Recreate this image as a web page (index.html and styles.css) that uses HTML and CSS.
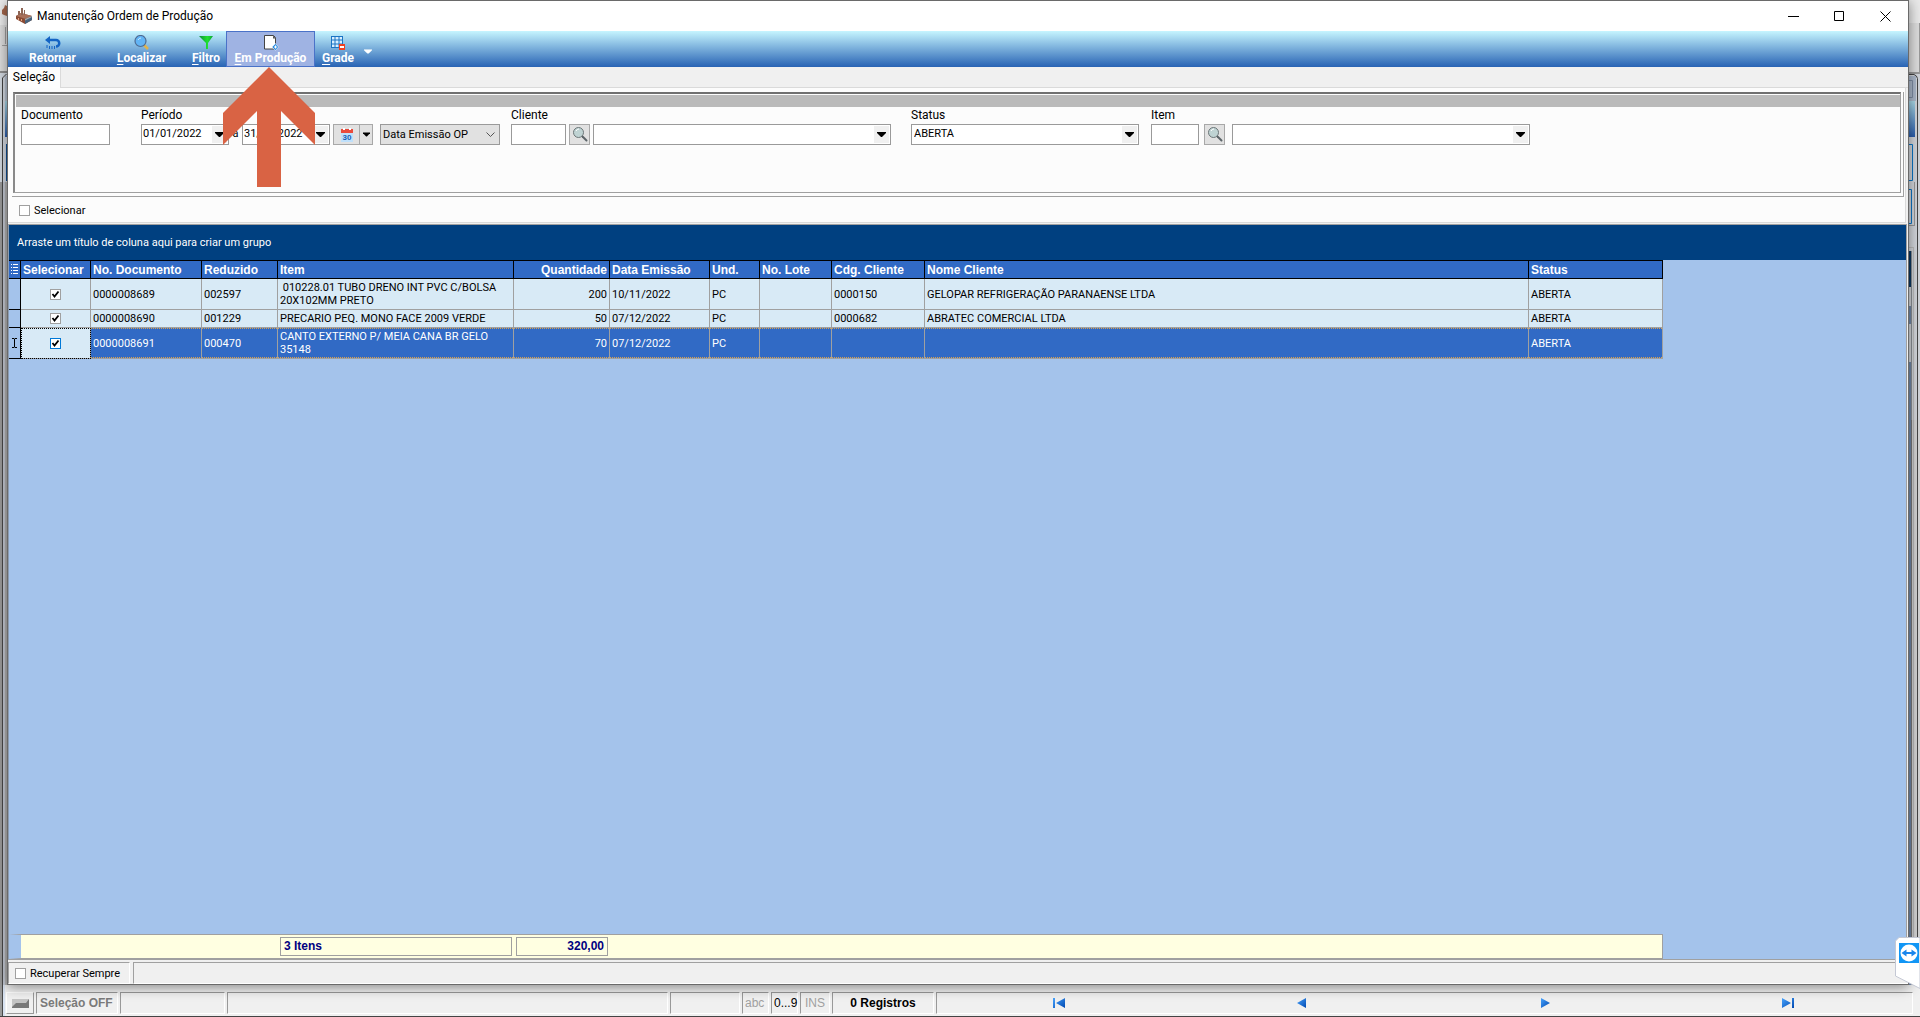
FILE: index.html
```html
<!DOCTYPE html>
<html lang="pt-BR">
<head>
<meta charset="utf-8">
<title>Manutenção Ordem de Produção</title>
<link rel="stylesheet" href="styles.css">
</head>
<body>
<svg width="0" height="0" class="defs" aria-hidden="true">
  <defs>
    <linearGradient id="sky" x1="0" y1="0" x2="0" y2="1"><stop offset="0" stop-color="#a9d8e6"/><stop offset="1" stop-color="#2a5cab"/></linearGradient>
    <linearGradient id="play" x1="0" y1="0" x2="1" y2="1"><stop offset="0" stop-color="#49a5ff"/><stop offset="1" stop-color="#0048b0"/></linearGradient>
    <linearGradient id="funnel" x1="0" y1="0" x2="1" y2="0"><stop offset="0" stop-color="#0a8f3c"/><stop offset=".6" stop-color="#1fe02f"/><stop offset="1" stop-color="#11a53a"/></linearGradient>
    <symbol id="down" viewBox="0 0 9 5"><path d="M0 0h9v1L5 5H4L0 1z"/></symbol>
    <symbol id="lens" viewBox="0 0 16 16"><path d="M10.500 10.500l4 4" stroke="#5c6468" stroke-width="2" stroke-linecap="round"/><circle cx="6.500" cy="6.500" r="5" fill="#bfd3d3" stroke="#6c7678"/><path d="M4 5q1-2 3-2" stroke="#fff" fill="none"/></symbol>
  </defs>
</svg>
<div class="desktop">
  <div class="workspace">
    <div class="edge edge-left">
      <svg width="7" height="182" viewBox="0 0 7 182">
        <path fill="#ececec" d="M0 0h7v25H0z"/><path fill="#a5674c" d="M2 10l2-2 1-3 2 1v10l-3-1-2-1z"/>
        <path fill="#dedede" d="M0 25h7v47H0z"/><path fill="#a0a0a0" d="M5 27h1v17H5zM2 45h5v1H2z"/><path fill="#8f8f8f" d="M0 71h7v2H0z"/>
        <path fill="#d4dae2" d="M0 73h7v109H0z"/><path fill="none" stroke="#444" d="M2.500 182V78l4-4"/>
        <path fill="#b9c3d2" d="M5 76h2v25H5z"/><path fill="url(#sky)" d="M5 101h2v36H5z"/><path fill="#0f4f96" d="M6 144h1v37H6z"/>
      </svg>
    </div>

    <main class="window">
      <header class="titlebar">
        <svg width="18" height="18" viewBox="0 0 18 18"><path fill="#8a4b34" d="M1 9l5-3 11 3v4l-7 4-9-5z"/><path fill="#a8705a" d="M1 9l5-3 11 3-6 3z"/><path fill="#46637e" d="M10 12l7-3v4l-7 4z"/><path fill="#8d6555" d="M3 8V4h2v4zM6 8V1h2v7zM9 8V3h1v5z"/><path fill="#a9a9a9" d="M10 12l7-3v1l-7 3.500z"/><path fill="#e6a483" d="M3 11h1v2H3zM6 12h1v2H6z"/></svg>
        <h1>Manutenção Ordem de Produção</h1>
        <div class="captions">
          <button type="button" aria-label="Minimizar"><svg width="11" height="11"><path d="M0 5.500h11" stroke="#000"/></svg></button>
          <button type="button" aria-label="Maximizar"><svg width="11" height="11"><path d="M.5.5h9v9h-9z" fill="none" stroke="#000"/></svg></button>
          <button type="button" aria-label="Fechar"><svg width="11" height="11"><path d="M.5.5l10 10M10.500.5l-10 10" stroke="#000"/></svg></button>
        </div>
      </header>

      <nav class="toolbar">
        <button type="button" class="tool wide"><svg width="16" height="16" viewBox="0 0 16 16"><path d="M3 5h8a2.800 2.800 0 0 1 0 6.500" fill="none" stroke="#1464c4" stroke-width="2.500"/><path d="M0 5l5-4v8z" fill="#1464c4"/><path d="M2 10v3M4.500 11v3M7 11v3M9.500 11v3" stroke="#1464c4"/></svg><span>Retornar</span></button>
        <button type="button" class="tool wide"><svg width="16" height="16" viewBox="0 0 16 16"><path d="M10 10l4 4" stroke="#e0b34c" stroke-width="2.500"/><circle cx="6.500" cy="6" r="5.500" fill="#62b4f5" stroke="#4d6b93" stroke-width="1.200"/><path d="M4 5q1-2 3-2" stroke="#c7e7ff" fill="none"/></svg><span><u>L</u>ocalizar</span></button>
        <button type="button" class="tool narrow"><svg width="16" height="16" viewBox="0 0 16 16"><path d="M1 1h14L10 8v6H8V8z" fill="url(#funnel)"/></svg><span><u>F</u>iltro</span></button>
        <div class="tool-slot">
          <button type="button" class="tool wide active"><svg width="16" height="16" viewBox="0 0 16 16"><path d="M1.500.5h9l2 2V14h-11z" fill="#fff" stroke="#444"/><path d="M10 .5v3h3" fill="#555"/><path d="M12.500 8.500l3 3.500-3 3.500L9 12z" fill="#2a8be0" stroke="#fff" stroke-width=".5"/><path d="M12.500 10.500v3M11 12h3" stroke="#fff"/></svg><span><u>E</u>m Produção</span></button>
          <svg class="pointer" width="92" height="120" viewBox="0 0 92 120" aria-hidden="true"><path d="M46 0l46 46v32L58 44v76H34V44L0 78V46z" fill="#d96344"/></svg>
        </div>
        <button type="button" class="tool medium"><svg width="16" height="16" viewBox="0 0 16 16"><path d="M1 1h12v12H1z" fill="#d9efff"/><path d="M1.500 1v12M5 1v12M9 1v12M12.500 1v12M1 1.500h12M1 5h12M1 9h12M1 12.500h12" stroke="#1b74c4"/><path d="M9 9h6v6H9z" fill="#f04020"/><path d="M10 11h4v2h-4z" fill="#fff"/></svg><span><u>G</u>rade</span></button>
        <button type="button" class="more" aria-label="Mais opções"><svg width="8" height="5" viewBox="0 0 9 5" fill="#fff"><use href="#down"/></svg></button>
      </nav>

      <div class="tabs"><button type="button" class="tab">Seleção</button></div>

      <section class="page">
        <div class="frame">
          <form class="filters">
            <div class="bar"></div>
            <div class="fields">
              <div class="field f-doc"><label for="doc">Documento</label><input id="doc" type="text"></div>
              <div class="field f-period"><label for="from">Período</label>
                <div class="group">
                  <span class="combo date"><input id="from" type="text" value="01/01/2022"><button type="button" aria-label="Abrir calendário"><svg width="9" height="5"><use href="#down"/></svg></button></span>
                  <span class="to">a</span>
                  <span class="combo date"><input type="text" aria-label="Data final" value="31/12/2022"><button type="button" aria-label="Abrir calendário"><svg width="9" height="5"><use href="#down"/></svg></button></span>
                  <button type="button" class="cal" aria-label="Calendário"><svg width="14" height="14" viewBox="0 0 14 14"><path fill="#bfe0fb" d="M1 4h12v10H1z"/><path fill="#ea4b3c" d="M1 1h12v4H1z"/><path fill="#fff" d="M3 0h2v2H3zM9 0h2v2H9z"/><text x="7" y="12" text-anchor="middle">30</text></svg></button><button type="button" class="cal-drop" aria-label="Opções de data"><svg width="7" height="5"><use href="#down"/></svg></button>
                  <span class="combo kind"><select aria-label="Tipo de data"><option>Data Emissão OP</option></select><svg width="9" height="6" viewBox="0 0 9 6"><path d="M.5.5l4 4 4-4" fill="none" stroke="#555"/></svg></span>
                </div>
              </div>
              <div class="field f-client"><label for="client">Cliente</label>
                <div class="group lookup"><input id="client" type="text" class="w55"><button type="button" class="find" aria-label="Buscar cliente"><svg width="16" height="16"><use href="#lens"/></svg></button>
                  <span class="combo long"><select aria-label="Nome do cliente"><option></option></select><i><svg width="9" height="5"><use href="#down"/></svg></i></span></div>
              </div>
              <div class="field f-status"><label for="status">Status</label>
                <span class="combo status"><select id="status"><option>ABERTA</option></select><i><svg width="9" height="5"><use href="#down"/></svg></i></span>
              </div>
              <div class="field"><label for="item">Item</label>
                <div class="group item"><input id="item" type="text" class="w48"><button type="button" class="find" aria-label="Buscar item"><svg width="16" height="16"><use href="#lens"/></svg></button>
                  <span class="combo long"><select aria-label="Descrição do item"><option></option></select><i><svg width="9" height="5"><use href="#down"/></svg></i></span></div>
              </div>
            </div>
          </form>
        </div>
        <label class="check-all"><input type="checkbox">Selecionar</label>
      </section>

      <section class="grid">
        <p class="group-hint">Arraste um título de coluna aqui para criar um grupo</p>
        <table>
          <colgroup><col class="c-ind"><col class="c-sel"><col class="c-doc"><col class="c-red"><col class="c-item"><col class="c-qty"><col class="c-date"><col class="c-und"><col class="c-lot"><col class="c-cdg"><col class="c-name"><col class="c-stat"></colgroup>
          <thead><tr><th class="ind"><svg width="8" height="11" viewBox="0 0 8 11"><path d="M0 .5h1M2 .5h5M0 3.500h1M2 3.500h5M0 6.500h1M2 6.500h5M0 9.500h1M2 9.500h5" stroke="#fff"/></svg></th><th>Selecionar</th><th>No. Documento</th><th>Reduzido</th><th>Item</th><th class="num">Quantidade</th><th>Data Emissão</th><th>Und.</th><th>No. Lote</th><th>Cdg. Cliente</th><th>Nome Cliente</th><th>Status</th></tr></thead>
          <tbody>
            <tr class="tall"><td class="ind"></td><td class="tick"><input type="checkbox" checked aria-label="Selecionar 0000008689"></td><td>0000008689</td><td>002597</td><td>&nbsp;010228.01 TUBO DRENO INT PVC C/BOLSA<br>20X102MM PRETO</td><td class="num">200</td><td>10/11/2022</td><td>PC</td><td></td><td>0000150</td><td>GELOPAR REFRIGERAÇÃO PARANAENSE LTDA</td><td>ABERTA</td></tr>
            <tr class="short"><td class="ind"></td><td class="tick"><input type="checkbox" checked aria-label="Selecionar 0000008690"></td><td>0000008690</td><td>001229</td><td>PRECARIO PEQ. MONO FACE 2009 VERDE</td><td class="num">50</td><td>07/12/2022</td><td>PC</td><td></td><td>0000682</td><td>ABRATEC COMERCIAL LTDA</td><td>ABERTA</td></tr>
            <tr class="tall current"><td class="ind"><svg width="7" height="10" viewBox="0 0 7 10"><path d="M1 .5h2l.5.5.5-.5h2M3.500 1v8M1 9.500h2l.5-.5.5.5h2" fill="none" stroke="#000"/></svg></td><td class="tick"><input type="checkbox" checked aria-label="Selecionar 0000008691"></td><td>0000008691</td><td>000470</td><td>CANTO EXTERNO P/ MEIA CANA BR GELO<br>35148</td><td class="num">70</td><td>07/12/2022</td><td>PC</td><td></td><td></td><td></td><td>ABERTA</td></tr>
          </tbody>
        </table>
        <div class="totals"><output class="count">3 Itens</output><output class="sum">320,00</output></div>
      </section>

      <footer class="options"><label><input type="checkbox">Recuperar Sempre</label><div></div></footer>
    </main>

    <div class="edge edge-right">
      <svg width="11" height="420" viewBox="0 0 11 420">
        <path fill="#e9e9e9" d="M0 0h11v23H0z"/><path fill="#dcdcdc" d="M0 23h11v49H0z"/><path fill="#999" d="M10 23h1v49h-1zM0 72h11v2H0z"/>
        <path fill="#d2d5da" d="M0 74h11v346H0z"/><path fill="#aab7c9" d="M0 76h7v25H0z"/><path fill="none" stroke="#7c8ba2" d="M0 80.500h3.500v17H0"/>
        <path fill="url(#sky)" d="M0 101h6v36H0z"/><path stroke="#0b74c4" fill="none" d="M0 144.500h3.500v36H0M0 189.500h2.500v34H0"/><path fill="#999" d="M5 182h1v44H0v-1h5z"/>
        <path fill="#bbb" d="M0 247h5v173H4V248H0z"/><path fill="#0c3660" d="M0 251h2v36H0z"/><path fill="#7189aa" d="M0 306h2v18H0zM0 362h2v58H0z"/><path fill="#8a8f94" d="M2 251h1v169H2z"/>
        <path fill="none" stroke="#444" d="M0 74.500h5q3 1 3.500 4V420"/>
      </svg>
    </div>
  </div>

  <footer class="statusbar">
    <button type="button" class="led" aria-label="Estado"><svg width="17" height="9"><path fill="#787878" d="M0 0h17v9H0z"/><path fill="#c4c4c4" d="M0 0h17l-3 4H4l-4 4z"/></svg></button>
    <div class="cell s-sel">Seleção OFF</div><div class="cell s-a"></div><div class="cell s-b"></div><div class="cell s-c"></div>
    <div class="cell key off k1">abc</div><div class="cell key k1">0...9</div><div class="cell key off k2">INS</div><div class="cell count-cell">0 Registros</div>
    <div class="cell pager">
      <button type="button" aria-label="Primeiro"><svg width="12" height="10"><path fill="url(#play)" d="M0 0h2v10H0zM12 0v10L3 5z"/></svg></button>
      <button type="button" aria-label="Anterior"><svg width="10" height="10"><path fill="url(#play)" d="M9 0v10L0 5z"/></svg></button>
      <button type="button" aria-label="Próximo"><svg width="10" height="10"><path fill="url(#play)" d="M1 0v10l9-5z"/></svg></button>
      <button type="button" aria-label="Último"><svg width="12" height="10"><path fill="url(#play)" d="M10 0h2v10h-2zM0 0v10l9-5z"/></svg></button>
    </div>
  </footer>
  <button type="button" class="remote" aria-label="Acesso remoto"><svg width="25" height="52" viewBox="0 0 25 52"><path d="M25 .5H4L.5 4v35L25 51.500z" fill="#fff" stroke="#c4c8d4"/><path fill="#1196f5" d="M4 6h20v20H4z"/><circle cx="14" cy="16" r="8.500" fill="#fff"/><path fill="#1a86ec" d="M6.500 16l5-3.500V15h5v-2.500l5 3.500-5 3.500V17h-5v2.500z"/></svg></button>
</div>
</body>
</html>
```
FILE: styles.css
```css
* { box-sizing: border-box; }
body { margin: 0; font: 11px/13px Roboto, "Noto Sans", sans-serif; color: #000; }
button, input, select { font: inherit; color: inherit; margin: 0; border-radius: 0; }
button { background: none; border: 0; padding: 0; display: flex; align-items: center; justify-content: center; }
svg { display: block; flex: none; }
.defs { position: absolute; }

.desktop { display: flex; flex-direction: column; height: 100vh; overflow: hidden; }
.workspace { flex: 1; display: flex; min-height: 0; }
.edge { flex: none; }
.edge-left { width: 7px; background: linear-gradient(90deg, #9a9a9a 0 2px, #484848 2px 3px, #c5cad4 3px 5px, #b4b4b4 5px 7px); }
.edge-right { width: 11px; background: linear-gradient(90deg, #7189aa 0 2px, #777 2px 3px, #d0d0d0 3px 4px, #b5b5b5 4px 5px, #d2d2d2 5px 8px, #444 8px 9px, #d5d5d5 9px); }

.window { position: relative; z-index: 1; flex: 1; min-width: 0; display: flex; flex-direction: column; background: #f0f0f0; border: 1px solid #6a6a6a; box-shadow: 0 2px 12px rgba(0, 0, 0, .45); }
.titlebar { height: 30px; background: #fff; display: flex; align-items: center; padding-left: 7px; gap: 4px; }
.titlebar h1 { flex: 1; margin: 0; font-size: 12px; line-height: 16px; font-weight: 400; }
.captions { display: flex; }
.captions button { width: 46px; height: 28px; }

.toolbar { height: 36px; display: flex; background: linear-gradient(#c6f5ff, #2863b4); }
.tool { height: 36px; flex-direction: column; justify-content: flex-start; padding-top: 4px; color: #fff; font-weight: 700; font-size: 12px; line-height: 14px; white-space: nowrap; }
.tool u { text-underline-offset: 2px; }
.wide { width: 89px; }
.narrow { width: 40px; }
.medium { width: 46px; }
.tool-slot { position: relative; }
.active { background: #9fb3e3; border: 1px solid #4a72c8; padding-top: 3px; }
.pointer { position: absolute; left: -3px; top: 36px; z-index: 2; pointer-events: none; }
.more { width: 14px; padding-top: 4px; }

.tabs { height: 21px; display: flex; border-bottom: 1px solid #dadada; }
.tab { width: 53px; height: 21px; background: #fdfdfd; border-right: 1px solid #dadada; font-size: 12px; }

.page { margin-right: 2px; padding: 4px 1px 0 4px; height: 135px; background: #fcfcfc; border-right: 1px solid #dadada; border-bottom: 1px solid #dadada; display: flex; flex-direction: column; }
.frame { height: 105px; padding: 0 2px 3px 1px; border-right: 1px solid #a0a0a0; border-bottom: 1px solid #a0a0a0; }
.filters { height: 101px; border: 1px solid #a0a0a0; border-top: 2px solid #707070; border-left: 2px solid #8a8a8a; outline: 0; }
.bar { height: 12px; margin: 1px 0 0 1px; background: #bababa; }
.fields { display: flex; padding: 1px 0 0 6px; }
.field { display: flex; flex-direction: column; align-items: flex-start; }
.field > label { font-size: 12px; line-height: 14px; margin-bottom: 2px; }
.f-doc { width: 120px; }
.f-period { width: 370px; }
.f-client { width: 400px; }
.f-status { width: 240px; }
.group { display: flex; }
input[type="text"], .combo { height: 21px; border: 1px solid #9a9a9a; background: #fff; }
input[type="text"] { padding: 0 1px; outline: 0; }
#doc { width: 89px; }
.w55 { width: 55px; }
.w48 { width: 48px; }
.combo { display: flex; position: relative; }
.combo input[type="text"] { border: 0; height: 19px; flex: 1; min-width: 0; padding-bottom: 2px; }
.combo select { appearance: none; border: 0; background: none; width: 100%; height: 19px; padding: 0 2px 2px; }
.date { width: 88px; }
.date button { width: 15px; height: 17px; margin: 1px; background: #f0f0f0; }
.combo i { position: absolute; right: 1px; top: 1px; width: 15px; height: 17px; background: #f0f0f0; display: flex; align-items: center; justify-content: center; pointer-events: none; }
.to { width: 13px; text-align: center; line-height: 20px; }
.cal, .cal-drop, .find { height: 21px; background: #e1e1e1; border: 1px solid #a8a8a8; }
.cal { width: 27px; margin-left: 3px; }
.cal text { font: 700 8px "Liberation Sans", sans-serif; fill: #1361b8; }
.cal-drop { width: 13px; border-left: 0; }
.kind { width: 120px; margin-left: 7px; background: #e1e1e1; }
.kind select { padding: 0 2px; }
.kind > svg { position: absolute; right: 4px; top: 7px; pointer-events: none; }
.find { width: 21px; padding-bottom: 1px; }
.lookup { gap: 3px; }
.item .find { margin: 0 7px 0 5px; }
.long { width: 298px; }
.status { width: 228px; }

.check-all { display: flex; align-items: center; gap: 4px; margin: 7px 0 0 7px; }
input[type="checkbox"] { appearance: none; width: 11px; height: 11px; background: #fff; border: 1px solid #a0a0a0; }

.grid { flex: 1; min-height: 0; margin-top: 1px; margin-right: 1px; background: #a4c3eb; border: 1px solid #a0a0a0; border-left-color: #8c9cb0; display: flex; flex-direction: column; }
.group-hint { margin: 0; height: 35px; padding-left: 8px; background: #004080; color: #fff; line-height: 36px; }
table { table-layout: fixed; width: 1654px; border-spacing: 0; margin: 0; }
.c-ind { width: 12px; } .c-sel { width: 70px; } .c-doc { width: 111px; } .c-red { width: 76px; } .c-item { width: 236px; } .c-qty { width: 96px; } .c-date { width: 100px; } .c-und { width: 50px; } .c-lot { width: 72px; } .c-cdg { width: 93px; } .c-name { width: 604px; } .c-stat { width: 134px; }
th { height: 19px; padding: 0 2px; background: #316ac5; color: #fff; border: 1px solid #000; border-left: 0; text-align: left; font: 700 12px/14px "Liberation Sans", sans-serif; white-space: nowrap; }
td { padding: 0 2px; background: #d8eaf6; border-right: 1px solid #a0a0a0; border-bottom: 1px solid #a0a0a0; white-space: nowrap; }
.tall td { height: 31px; }
.short td { height: 18px; }
.num { text-align: right; }
th.ind { padding: 0 2px; }
td.ind { background: #a4c3eb; border-color: #000; }
.tick input { display: block; margin: 0 auto; background: #fff url("data:image/svg+xml,%3Csvg xmlns='http://www.w3.org/2000/svg' width='9' height='9'%3E%3Cpath d='M1.500 4l2 2.500 4-5' fill='none' stroke='%23000' stroke-width='1.800'/%3E%3C/svg%3E") center no-repeat; }
.current td:not(.ind) { color: #fff; background: repeating-linear-gradient(90deg, #d8a050 0 1px, #316ac5 1px 2px) top / 100% 1px no-repeat, repeating-linear-gradient(90deg, #d8a050 0 1px, #316ac5 1px 2px) bottom / 100% 1px no-repeat, #316ac5; }
.current td.tick:not(.ind) { background: #d8eaf6; outline: 1px dotted #000; outline-offset: -1px; }
.current .tick input { border-color: #0078d7; }
.totals { width: 1654px; height: 25px; margin-top: auto; padding: 2px 0 0 259px; display: flex; gap: 4px; border: 1px solid #a0a0a0; border-left: 12px solid #a4c3eb; background: #ffffe1; color: #000080; font: 700 12px/17px "Liberation Sans", sans-serif; }
.totals output { height: 19px; padding: 0 3px; border: 1px solid #a0a0a0; }
.count { width: 232px; }
.sum { width: 92px; text-align: right; }

.options { height: 24px; padding-top: 2px; display: flex; gap: 3px; }
.options > * { border: 1px solid #a0a0a0; border-color: #a0a0a0 #fff #fff #a0a0a0; }
.options label { width: 122px; padding-left: 6px; display: flex; align-items: center; gap: 4px; }
.options div { flex: 1; }

.statusbar { height: 32px; padding: 7px 7px 2px 6px; display: flex; gap: 2px; border-bottom: 1px solid #444; background: linear-gradient(90deg, #9a9a9a 0 2px, #484848 2px 3px, #d8e2f0 3px 5px, #f0f0f0 5px); }
.cell, .led { border: 1px solid #a0a0a0; border-color: #999 #fff #fff #999; font: 12px/20px "Liberation Sans", sans-serif; }
.led { width: 28px; border-color: #fff #999 #999 #fff; }
.s-sel { width: 82px; padding-left: 3px; font-weight: 700; color: #7a7a7a; white-space: nowrap; }
.s-a { width: 105px; }
.s-b { width: 441px; }
.s-c { width: 70px; }
.key { padding-left: 3px; }
.off { color: #a0a0a0; }
.k1 { width: 27px; white-space: nowrap; padding-left: 2px; }
.k2 { width: 30px; padding-left: 4px; }
.count-cell { width: 102px; text-align: center; font-weight: 700; }
.pager { flex: 1; display: flex; padding-right: 3px; }
.pager button { flex: 1; }
.remote { position: absolute; right: 0; bottom: 28px; z-index: 3; }
```
